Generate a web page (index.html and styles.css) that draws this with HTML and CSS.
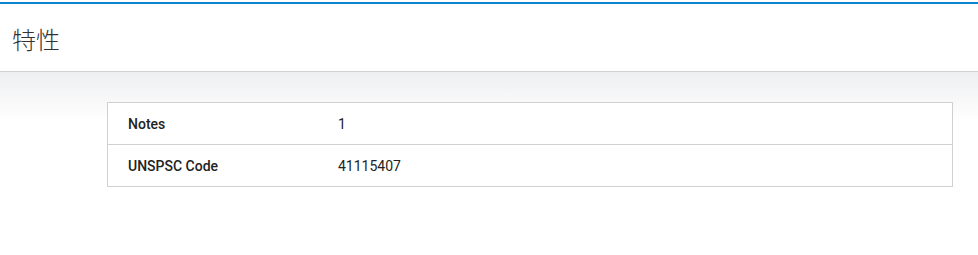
FILE: index.html
```html
<!DOCTYPE html>
<html lang="zh">
<head>
  <meta charset="UTF-8" />
  <meta name="viewport" content="width=device-width, initial-scale=1.0"/>
  <title>特性</title>
  <link rel="stylesheet" href="styles.css">
</head>
<body>

  <div class="page-header">
    <h1>特性</h1>
  </div>

  <div class="content">
    <table class="attributes">
      <tbody>
        <tr>
          <th>Notes</th>
          <td>1</td>
        </tr>
        <tr>
          <th>UNSPSC Code</th>
          <td>41115407</td>
        </tr>
      </tbody>
    </table>
  </div>

</body>
</html>
```

FILE: styles.css
```css
body {
  margin: 0;
  padding-top: 2px;
  font-family: Roboto, "Noto Sans CJK SC", sans-serif;
  background-color: #fff;
  color: #222;
}

.page-header {
  border-top: 2px solid #0a84d0;
  border-bottom: 1px solid #d2d2d2;
  box-sizing: border-box;
  height: 70px;
  padding: 0 12px;
  display: flex;
  align-items: center;
}

h1 {
  margin: 0;
  font-family: "Noto Sans CJK SC", sans-serif;
  font-size: 24px;
  font-weight: 300;
  color: #333;
  position: relative;
  top: 1px;
}

.content {
  background: linear-gradient(to bottom, #eeeff1 0px, #fff 50px);
  padding: 30px 25px 0 107px;
  height: 150px;
}

.attributes {
  width: 100%;
  border-collapse: collapse;
  background-color: #fff;
  font-size: 14px;
}

.attributes th,
.attributes td {
  border-top: 1px solid #d0d0d0;
  border-bottom: 1px solid #d0d0d0;
  height: 41px;
  padding: 0;
  text-align: left;
  vertical-align: middle;
}

.attributes th {
  border-left: 1px solid #d0d0d0;
  width: 210px;
  padding-left: 20px;
  font-weight: 500;
}

.attributes td {
  border-right: 1px solid #d0d0d0;
}
```
